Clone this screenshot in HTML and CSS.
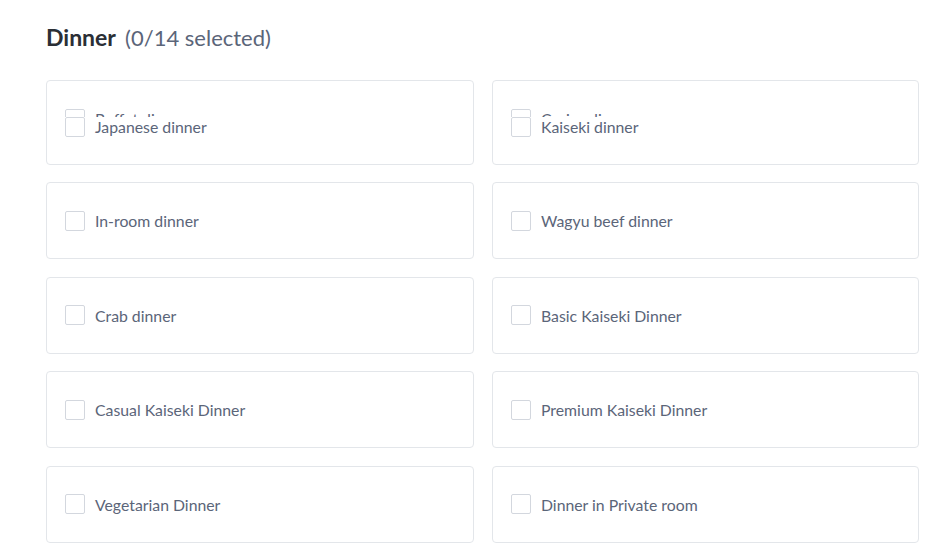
FILE: index.html
```html
<!DOCTYPE html>
<html lang="en">
<head>
    <meta charset="UTF-8">
    <meta name="viewport" content="width=device-width, initial-scale=1.0">
    <title>Dinner</title>
    <link rel="stylesheet" href="styles.css">
</head>
<body>

    <div class="section">
        <h2 class="section-title">Dinner <span class="count">(0/14 selected)</span></h2>

        <div class="options">
            <!-- first card is mid-transition: two items stacked -->
            <div class="option">
                <div class="stack">
                    <label class="item"><span class="box"></span>Buffet dinner</label>
                    <label class="item item-over"><span class="box"></span>Japanese dinner</label>
                </div>
            </div>
            <div class="option">
                <div class="stack">
                    <label class="item"><span class="box"></span>Cruise dinner</label>
                    <label class="item item-over"><span class="box"></span>Kaiseki dinner</label>
                </div>
            </div>

            <div class="option"><label class="item"><span class="box"></span>In-room dinner</label></div>
            <div class="option"><label class="item"><span class="box"></span>Wagyu beef dinner</label></div>
            <div class="option"><label class="item"><span class="box"></span>Crab dinner</label></div>
            <div class="option"><label class="item"><span class="box"></span>Basic Kaiseki Dinner</label></div>
            <div class="option"><label class="item"><span class="box"></span>Casual Kaiseki Dinner</label></div>
            <div class="option"><label class="item"><span class="box"></span>Premium Kaiseki Dinner</label></div>
            <div class="option"><label class="item"><span class="box"></span>Vegetarian Dinner</label></div>
            <div class="option"><label class="item"><span class="box"></span>Dinner in Private room</label></div>
        </div>
    </div>

</body>
</html>
```

FILE: styles.css
```css
body {
    font-family: Lato, "Liberation Sans", sans-serif;
    margin: 0;
    padding: 0;
    background-color: #fff;
}

.section {
    width: 873px;
    padding: 24px 0 0 46px;
}

.section-title {
    margin: 0 0 29px 0;
    font-size: 23px;
    line-height: 26px;
    font-weight: 700;
    color: #2b2f36;
}

.count {
    margin-left: 4px;
    font-size: 22px;
    font-weight: 400;
    color: #5b6579;
}

.options {
    display: grid;
    grid-template-columns: 428px 427px;
    column-gap: 18px;
    row-gap: 17.45px;
}

.option {
    border: 1px solid #e3e6ea;
    border-radius: 4px;
    padding: 27.5px 18px;
    background-color: #fff;
}

.stack {
    height: 28px;
    overflow: hidden;
}

.item {
    display: flex;
    align-items: center;
    height: 20px;
    font-size: 15.8px;
    color: #5b6579;
    background-color: #fff;
}

.item-over {
    position: relative;
    margin-top: -12px;
}

.box {
    width: 18px;
    height: 18px;
    border: 1px solid #d3d7de;
    border-radius: 2px;
    margin-right: 10px;
    flex-shrink: 0;
}
```
